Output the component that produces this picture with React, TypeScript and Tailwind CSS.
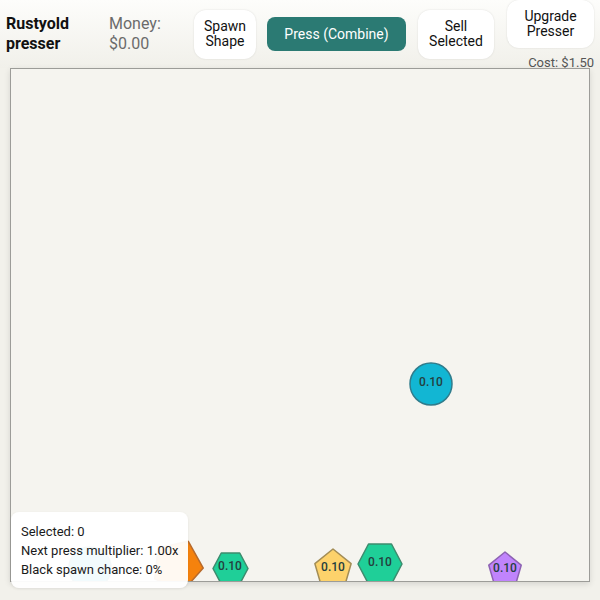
import React from "react";

type Shape = {
  kind: "circle" | "hex" | "pent";
  x: number; // centre, page coords
  y: number;
  w: number;
  h: number;
  fill: string;
  stroke: string;
  rot?: number;
  label?: boolean;
};

// canvas inner origin on the page
const OX = 11;
const OY = 69;

const shapes: Shape[] = [
  { kind: "circle", x: 90, y: 568, w: 44, h: 44, fill: "#12b6d3", stroke: "#2f7c8c", label: false },
  { kind: "pent", x: 178, y: 564, w: 54, h: 52, fill: "#f5820d", stroke: "#b76a2c", rot: 24, label: false },
  { kind: "hex", x: 230, y: 568, w: 37, h: 33, fill: "#1fcf98", stroke: "#3d8c6e" },
  { kind: "pent", x: 333, y: 569, w: 40, h: 42, fill: "#fdd26b", stroke: "#a38d55" },
  { kind: "hex", x: 380, y: 564, w: 46, h: 42, fill: "#1fcf98", stroke: "#3d8c6e" },
  { kind: "pent", x: 505, y: 570, w: 36, h: 38, fill: "#c084fc", stroke: "#8d62b3" },
  { kind: "circle", x: 431, y: 384, w: 44, h: 44, fill: "#12b6d3", stroke: "#2f7c8c" },
];

function outline(kind: Shape["kind"], w: number, h: number) {
  if (kind === "hex") {
    const q = w * 0.25;
    return `${q},1 ${w - q},1 ${w - 1},${h / 2} ${w - q},${h - 1} ${q},${h - 1} 1,${h / 2}`;
  }
  // pentagon, point up
  const pts: string[] = [];
  for (let i = 0; i < 5; i++) {
    const a = -Math.PI / 2 + (i * 2 * Math.PI) / 5;
    const px = w / 2 + (w / 2 - 1) * Math.cos(a);
    const py = h * 0.53 + (h * 0.53 - 1) * Math.sin(a);
    pts.push(`${px.toFixed(1)},${py.toFixed(1)}`);
  }
  return pts.join(" ");
}

function Piece({ s }: { s: Shape }) {
  return (
    <div
      className="absolute flex items-center justify-center"
      style={{ left: s.x - s.w / 2 - OX, top: s.y - s.h / 2 - OY, width: s.w, height: s.h }}
    >
      <svg
        width={s.w}
        height={s.h}
        className="absolute inset-0"
        style={{ transform: s.rot ? `rotate(${s.rot}deg)` : undefined }}
      >
        {s.kind === "circle" ? (
          <circle cx={s.w / 2} cy={s.h / 2} r={s.w / 2 - 1} fill={s.fill} stroke={s.stroke} strokeWidth={1.5} />
        ) : (
          <polygon points={outline(s.kind, s.w, s.h)} fill={s.fill} stroke={s.stroke} strokeWidth={1.5} strokeLinejoin="round" />
        )}
      </svg>
      {s.label !== false && (
        <span className="relative -translate-y-[2px] text-[12px] font-medium text-[#24403e]">0.10</span>
      )}
    </div>
  );
}

export default function App() {
  return (
    <div className="relative h-[600px] w-[600px] overflow-hidden bg-[#f2f1eb] font-['Roboto','Liberation_Sans',sans-serif]">
      {/* top bar */}
      <div className="flex h-[68px] items-center bg-gradient-to-b from-[#fdfdfb] to-[#f1f0ea] pl-[6px]">
        <div className="w-[80px] text-[16px] font-bold leading-[20px] text-[#111]">Rustyold presser</div>
        <div className="ml-[23px] w-[62px] text-[16px] leading-[20px] text-[#6b6b6b]">Money: $0.00</div>
        <button className="ml-[23px] h-[49px] w-[62px] rounded-xl bg-white text-[14px] leading-[15px] text-[#111] shadow-[0_0_2px_rgba(0,0,0,0.12)]">
          Spawn Shape
        </button>
        <button className="ml-[11px] h-[34px] w-[139px] rounded-lg bg-[#2b7a73] text-[14px] text-white">
          Press (Combine)
        </button>
        <button className="ml-[12px] h-[49px] w-[76px] rounded-xl bg-white text-[14px] leading-[15px] text-[#111] shadow-[0_0_2px_rgba(0,0,0,0.12)]">
          Sell Selected
        </button>
        <div className="ml-[12px] flex h-[70px] w-[88px] flex-col items-end self-start">
          <button className="h-[48px] w-[87px] rounded-xl bg-white text-[14px] leading-[15px] text-[#111] shadow-[0_0_2px_rgba(0,0,0,0.12)]">
            Upgrade Presser
          </button>
          <span className="mt-[8px] text-[13px] leading-[14px] text-[#555]">Cost: $1.50</span>
        </div>
      </div>

      {/* play field */}
      <div className="relative mx-[10px] h-[514px] overflow-hidden border border-[#9c9c98] bg-[#f5f4ef] shadow-[0_2px_6px_rgba(0,0,0,0.12)]">
        {shapes.map((s, i) => (
          <Piece key={i} s={s} />
        ))}
      </div>

      {/* stats */}
      <div className="absolute left-[11px] top-[512px] flex h-[76px] w-[177px] flex-col justify-center gap-[2px] rounded-lg bg-white/95 pl-[10px] text-[13px] leading-[17px] text-[#1a1a1a] shadow-[0_1px_3px_rgba(0,0,0,0.08)]">
        <div>Selected: 0</div>
        <div>Next press multiplier: 1.00x</div>
        <div>Black spawn chance: 0%</div>
      </div>
    </div>
  );
}
